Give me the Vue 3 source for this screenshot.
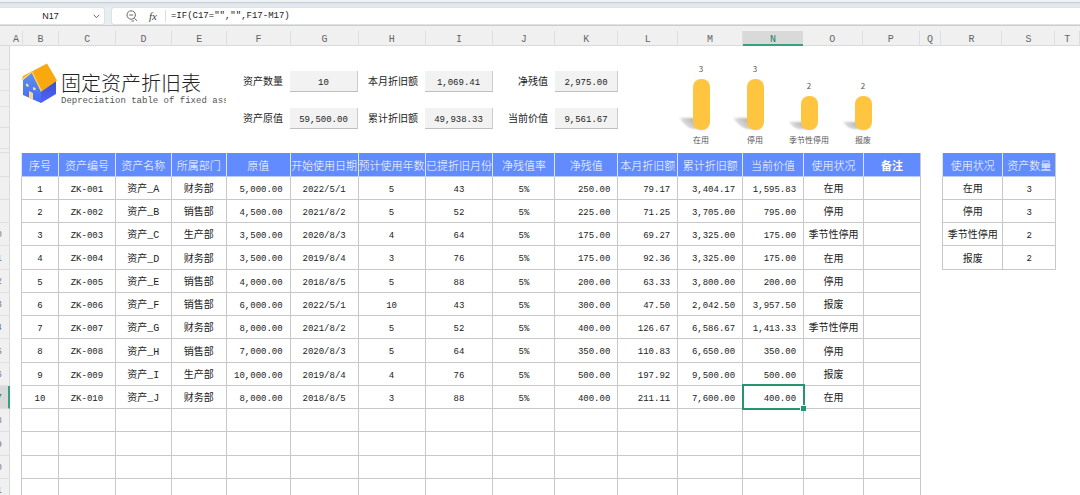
<template>
  <div class="app">
    <div class="formula-bar">
      <div class="name-box">
        <input v-model="cellName" class="name-input" type="text" aria-label="名称框" />
        <button class="icon-btn caret" type="button" aria-label="展开">
          <svg width="7" height="5" viewBox="0 0 7 5"><path d="M0.7 0.8L3.5 3.7L6.3 0.8" /></svg>
        </button>
      </div>
      <div class="formula-box">
        <button class="icon-btn" type="button" aria-label="查找">
          <svg width="12" height="12" viewBox="0 0 12 12">
            <circle cx="5.2" cy="5" r="4.2" />
            <path d="M3.2 5H7.2M8.3 8.2L11 10.8M5.5 11H8" />
          </svg>
        </button>
        <button class="icon-btn fx" type="button" aria-label="插入函数">fx</button>
        <input v-model="formula" class="formula-input" type="text" aria-label="编辑栏" />
      </div>
    </div>

    <div class="column-heads">
      <div class="corner"></div>
      <div
        v-for="col in columns"
        :key="col.name"
        class="column-head"
        :class="{ active: col.name === 'N' }"
        :style="{ flexGrow: col.width }"
      >
        {{ col.name }}
      </div>
    </div>

    <div class="body">
      <div class="row-heads">
        <div
          v-for="n in 21"
          :key="n"
          class="row-head"
          :class="['r' + n, { active: n === 17, tall: n > 7 && (n - 7) % 4 === 0 }]"
        >
          {{ n > 9 ? n : '' }}
        </div>
      </div>

      <div class="sheet">
        <div class="summary">
          <div class="brand">
            <svg class="logo" width="36" height="41" viewBox="0 0 36 41">
              <defs>
                <linearGradient id="wall" x1="0" y1="0" x2="0" y2="1">
                  <stop offset="0" stop-color="#5c93ee" />
                  <stop offset="1" stop-color="#4668f5" />
                </linearGradient>
                <linearGradient id="side" x1="0" y1="0" x2="0" y2="1">
                  <stop offset="0" stop-color="#3a4fd0" />
                  <stop offset="1" stop-color="#5263ff" />
                </linearGradient>
              </defs>
              <path d="M2 17L11 9L20 28V40L2 32Z" fill="url(#wall)" />
              <path d="M20 28L35 18V31L20 40Z" fill="url(#side)" />
              <path d="M1 16L2 13L26 0.5L36 17.5L20.5 28.5L11 9Z" fill="#f9a90f" />
              <path d="M1 17L11 9L20.5 28.5" fill="none" stroke="#fcd06a" stroke-width="1.3" />
              <path d="M8 28L12 30V37L8 35Z" fill="#f7dc85" />
              <path d="M5 20.5L7.5 21.5V24L5 23ZM12 24L14.5 25V27.5L12 26.5Z" fill="#f7e49f" />
            </svg>
            <div class="brand-text">
              <h1>固定资产折旧表</h1>
              <p>Depreciation table of fixed assets</p>
            </div>
          </div>

          <dl class="stats">
            <template v-for="stat in stats" :key="stat.label">
              <dt>{{ stat.label }}</dt>
              <dd>{{ stat.value }}</dd>
            </template>
          </dl>

          <div class="chart">
            <div v-for="item in statuses" :key="item.name" class="chart-item">
              <span class="chart-value">{{ item.count }}</span>
              <div class="bar" :style="{ height: item.count * 17 + 'px' }"></div>
              <span class="chart-label">{{ item.name }}</span>
            </div>
          </div>
        </div>

        <div class="tables">
          <table class="assets">
            <colgroup>
              <col v-for="col in assetCols" :key="col.name" :style="{ width: (col.width / 900) * 100 + '%' }" />
            </colgroup>
            <thead>
              <tr>
                <th v-for="head in heads" :key="head" :class="{ bold: head === '备注' }">{{ head }}</th>
              </tr>
            </thead>
            <tbody>
              <tr v-for="(row, r) in rows" :key="r">
                <td
                  v-for="(cell, c) in row"
                  :key="c"
                  :class="{ num: numeric.includes(c), cjk: wide.includes(c), selected: r === 9 && c === 12 }"
                >
                  {{ cell }}
                </td>
              </tr>
            </tbody>
          </table>

          <table class="counts">
            <colgroup>
              <col v-for="w in [61, 53]" :key="w" :style="{ width: (w / 114) * 100 + '%' }" />
            </colgroup>
            <thead>
              <tr>
                <th>使用状况</th>
                <th>资产数量</th>
              </tr>
            </thead>
            <tbody>
              <tr v-for="item in statuses" :key="item.name">
                <td class="cjk">{{ item.name }}</td>
                <td>{{ item.count }}</td>
              </tr>
            </tbody>
          </table>
        </div>
      </div>
    </div>
  </div>
</template>

<script setup>
import { ref } from 'vue'

const cellName = ref('N17')
const formula = ref('=IF(C17="","",F17-M17)')

const widths = [12, 36, 57, 56, 55, 64, 68, 67, 68, 62, 63, 60, 65, 61, 60, 57, 21, 61, 53, 24]
const columns = widths.map((width, i) => ({ name: String.fromCharCode(65 + i), width }))
const assetCols = columns.slice(1, 16).map((col, i) => (i === 0 ? { ...col, width: 37 } : col))

const heads = [
  '序号', '资产编号', '资产名称', '所属部门', '原值', '开始使用日期', '预计使用年数', '已提折旧月份',
  '净残值率', '净残值', '本月折旧额', '累计折旧额', '当前价值', '使用状况', '备注',
]

// columns aligned right / columns holding Chinese text
const numeric = [4, 9, 10, 11, 12]
const wide = [2, 3, 13]

const assets = [
  ['财务部', '5,000.00', '2022/5/1', 5, 43, '250.00', '79.17', '3,404.17', '1,595.83', '在用'],
  ['销售部', '4,500.00', '2021/8/2', 5, 52, '225.00', '71.25', '3,705.00', '795.00', '停用'],
  ['生产部', '3,500.00', '2020/8/3', 4, 64, '175.00', '69.27', '3,325.00', '175.00', '季节性停用'],
  ['财务部', '3,500.00', '2019/8/4', 3, 76, '175.00', '92.36', '3,325.00', '175.00', '在用'],
  ['销售部', '4,000.00', '2018/8/5', 5, 88, '200.00', '63.33', '3,800.00', '200.00', '停用'],
  ['销售部', '6,000.00', '2022/5/1', 10, 43, '300.00', '47.50', '2,042.50', '3,957.50', '报废'],
  ['财务部', '8,000.00', '2021/8/2', 5, 52, '400.00', '126.67', '6,586.67', '1,413.33', '季节性停用'],
  ['销售部', '7,000.00', '2020/8/3', 5, 64, '350.00', '110.83', '6,650.00', '350.00', '停用'],
  ['生产部', '10,000.00', '2019/8/4', 4, 76, '500.00', '197.92', '9,500.00', '500.00', '报废'],
  ['财务部', '8,000.00', '2018/8/5', 3, 88, '400.00', '211.11', '7,600.00', '400.00', '在用'],
]

const rows = assets.map((a, i) => [
  i + 1,
  'ZK-' + String(i + 1).padStart(3, '0'),
  '资产_' + String.fromCharCode(65 + i),
  ...a.slice(0, 5),
  '5%',
  ...a.slice(5),
  '',
])
for (let i = 0; i < 4; i++) {
  rows.push(Array(15).fill(''))
}

const stats = [
  { label: '资产数量', value: '10' },
  { label: '本月折旧额', value: '1,069.41' },
  { label: '净残值', value: '2,975.00' },
  { label: '资产原值', value: '59,500.00' },
  { label: '累计折旧额', value: '49,938.33' },
  { label: '当前价值', value: '9,561.67' },
]

const statuses = [
  { name: '在用', count: 3 },
  { name: '停用', count: 3 },
  { name: '季节性停用', count: 2 },
  { name: '报废', count: 2 },
]
</script>

<style>
body {
  margin: 0;
  overflow: hidden;
}
</style>

<style scoped>
.app {
  height: 100vh;
  display: flex;
  flex-direction: column;
  overflow: hidden;
  background: #fff;
  color: #222;
  font: 9px/12px 'Liberation Mono', 'Noto Sans CJK SC', monospace;
}

.app * {
  box-sizing: border-box;
}

.formula-bar {
  flex: none;
  display: flex;
  gap: 6px;
  height: 26px;
  padding-top: 7px;
  border-bottom: 1px solid #ccc;
  background: linear-gradient(#eef2f4 2px, #c6cfd7 2px, #c6cfd7 3px, #dde4e9 3px, #e8edf0 8px);
}

.name-box,
.formula-box {
  display: flex;
  align-items: center;
  background: #fff;
  border: 1px solid #dce2e6;
}

.name-box {
  width: 105px;
  border-left: 0;
  border-radius: 0 3px 3px 0;
}

.formula-box {
  flex: 1;
  padding-left: 14px;
  border-right: 0;
  border-radius: 3px 0 0 3px;
}

input {
  min-width: 0;
  padding: 0;
  border: 0;
  outline: 0;
  background: none;
  color: #222;
  font: 9px/12px 'Liberation Mono', monospace;
}

.name-input {
  flex: 1;
  text-align: center;
  font-family: 'Liberation Sans', sans-serif;
}

.icon-btn {
  display: flex;
  padding: 0;
  border: 0;
  background: none;
  color: #444;
}

.icon-btn svg {
  fill: none;
  stroke: #666;
  stroke-width: 1;
}

.caret {
  margin-right: 4px;
}

.name-input {
  padding-left: 8px;
}

.fx {
  margin-left: 11px;
  font: italic 11px/14px 'Liberation Serif', serif;
}

.formula-input {
  flex: 1;
  margin-left: 8px;
  padding-left: 5px;
  border-left: 1px solid #ddd;
}

.column-heads {
  flex: none;
  display: flex;
  height: 20px;
  padding-top: 5px;
  border-bottom: 1px solid #dadada;
  background: #f0f0f0;
}

.corner {
  flex: none;
  width: 10px;
}

.column-head {
  flex: 1 1 0;
  min-width: 0;
  border-right: 1px solid #dedede;
  color: #666;
  font-size: 10px;
  line-height: 18px;
  text-align: center;
}

.column-head.active {
  margin-bottom: -1px;
  border-right: 0;
  border-bottom: 2px solid #35a27c;
  background: #d9d9d9;
  color: #17835c;
}

.body {
  flex: 1;
  min-height: 0;
  display: flex;
}

.row-heads {
  flex: none;
  width: 10px;
  background: #f0f0f0;
}

.row-head {
  display: flex;
  align-items: center;
  justify-content: flex-end;
  height: 23px;
  padding-top: 2px;
  padding-right: 7px;
  overflow: hidden;
  border-right: 1px solid #dadada;
  border-bottom: 1px solid #e0e0e0;
  color: #777;
}

.row-head.r1,
.row-head.r7,
.row-head.tall {
  height: 24px;
}

.row-head.r2,
.row-head.r4,
.row-head.r5 {
  height: 21px;
}

.row-head.r3 {
  height: 16px;
}

.row-head.r6 {
  height: 4px;
}

.row-head.active {
  padding-right: 6px;
  border-right: 2px solid #35a27c;
  background: #d9d9d9;
  color: #17835c;
}

.sheet {
  flex: 1;
  min-width: 0;
}

.summary {
  display: grid;
  grid-template-columns: 11fr 205fr 392fr 56fr 216fr 190fr;
  height: 107px;
}

.brand {
  grid-column: 2;
  display: flex;
  align-items: flex-start;
  gap: 4px;
  min-width: 0;
  padding-top: 17px;
  overflow: hidden;
}

.logo {
  flex: none;
}

.brand-text {
  padding-top: 7px;
  white-space: nowrap;
}

h1 {
  margin: 0;
  font: 300 20px/25px 'Noto Sans CJK SC', sans-serif;
}

p {
  margin: 0;
  color: #555;
}

.stats {
  grid-column: 3;
  display: grid;
  grid-template-columns: 64fr 68fr 67fr 68fr 62fr 63fr;
  grid-auto-rows: 21px;
  row-gap: 16px;
  margin: 0;
  padding-top: 25px;
}

.stats dt {
  padding-right: 7px;
  font-size: 10px;
  line-height: 24px;
  text-align: right;
  white-space: nowrap;
}

.stats dd {
  margin: 0;
  border-right: 1px solid #ccc;
  border-bottom: 1px solid #bfbfbf;
  background: #f2f2f2;
  line-height: 24px;
  text-align: center;
}

.chart {
  position: relative;
  z-index: 0;
  grid-column: 5;
  display: flex;
  align-items: flex-end;
  padding-bottom: 7px;
}

.chart-item {
  flex: 1;
  display: flex;
  flex-direction: column;
  align-items: center;
  color: #555;
  font: 8px/12px 'Noto Sans CJK SC', sans-serif;
}

.chart-value {
  margin-bottom: 4px;
}

.chart-label {
  margin-top: 4px;
  white-space: nowrap;
}

.bar {
  position: relative;
  width: 17px;
  border-radius: 8px;
  background: #ffc541;
}

/* soft shadow cast to the left of the bar */
.bar::before {
  content: '';
  position: absolute;
  z-index: -1;
  right: 8px;
  bottom: 1px;
  width: 18px;
  height: 22%;
  background: linear-gradient(to left, #aaa, #ddd);
  border-radius: 4px;
  transform: skewX(45deg);
  filter: blur(1px);
}

.tables {
  display: grid;
  grid-template-columns: 11fr 900fr 21fr 114fr 24fr;
  align-items: start;
}

table {
  width: 100%;
  table-layout: fixed;
  border-spacing: 0;
  border-right: 1px solid #c8c8c8;
}

.assets {
  grid-column: 2;
}

.counts {
  grid-column: 4;
}

th,
td {
  height: 23px;
  padding: 3px 0 0;
  border-left: 1px solid #c8c8c8;
  border-bottom: 1px solid #c8c8c8;
  text-align: center;
  white-space: nowrap;
}

th {
  height: 24px;
  padding-top: 4px;
  border-left-color: #dbe4ff;
  border-bottom-color: #b9caff;
  background: #628bff;
  color: #fff;
  font-size: 11px;
  font-weight: 300;
}

th.bold {
  font-weight: 700;
}

tbody tr:nth-child(4n) td {
  height: 24px;
}

td.num {
  padding-right: 7px;
  text-align: right;
}

td.cjk {
  padding-top: 4px;
  font-size: 10px;
}

td.selected {
  position: relative;
}

td.selected::before {
  content: '';
  position: absolute;
  inset: -2px -2px -2px -1px;
  border: 2px solid #26946c;
}

td.selected::after {
  content: '';
  position: absolute;
  right: -3px;
  bottom: -3px;
  width: 5px;
  height: 5px;
  border-top: 1px solid #fff;
  border-left: 1px solid #fff;
  background: #26946c;
}
</style>
